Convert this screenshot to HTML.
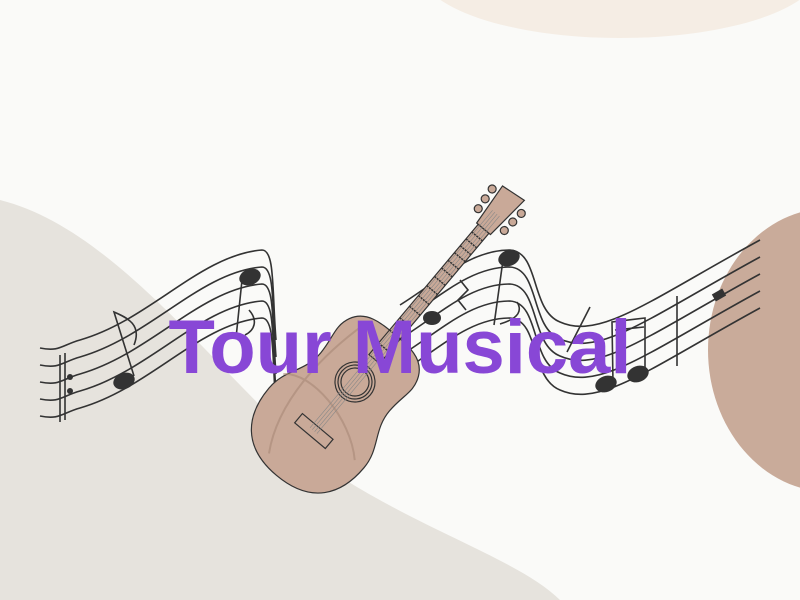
<!DOCTYPE html>
<html><head><meta charset="utf-8"><style>
html,body{margin:0;padding:0;width:800px;height:600px;overflow:hidden;background:#fafaf8}
svg{position:absolute;left:0;top:0}
.t{position:absolute;left:0;width:800px;top:310px;text-align:center;font:bold 76px "Liberation Sans",sans-serif;color:#8847d6;letter-spacing:0;line-height:1}
</style></head><body>
<svg width="800" height="600" viewBox="0 0 800 600">
<ellipse cx="620" cy="-30" rx="200" ry="68" fill="#f5ede4"/>
<path d="M0,200 C120,230 220,380 330,470 C420,530 520,560 560,600 L0,600 Z" fill="#e6e3dd"/>
<ellipse cx="830" cy="350" rx="122" ry="142" fill="#c9ab9a"/>
<g fill="none" stroke="#333" stroke-width="1.6">
<g id="st">
<path d="M40,348 C60,352 62,345 80,340 C150,320 200,255 262,250 C275,250 272,290 276,340"/>
<path d="M400,305 C440,280 470,250 510,250 C540,252 530,310 560,322 C600,340 650,300 760,240"/>
</g>
<use href="#st" y="17"/><use href="#st" y="34"/><use href="#st" y="51"/><use href="#st" y="68"/>
<path d="M60,355 V422 M65,353 V420 M677,296 V366 M567,352 L590,307"/>
<path d="M134,376 L114,312 C128,318 142,325 134,345 M242,280 L236,338 M503,260 L494,325 M517,302 C522,310 520,318 500,324 M613,383 L612,322 L645,318 L645,372 M615,330 L644,327"/>
<path d="M249,310 C258,320 255,330 245,335"/>
<path d="M460,280 L468,290 L458,300 L466,310"/>
</g>
<g fill="#333">
<ellipse cx="124" cy="381" rx="11" ry="8" transform="rotate(-20 124 381)"/>
<ellipse cx="250" cy="277" rx="11" ry="8" transform="rotate(-20 250 277)"/>
<ellipse cx="509" cy="258" rx="11" ry="8" transform="rotate(-20 509 258)"/>
<ellipse cx="432" cy="318" rx="9" ry="7"/>
<ellipse cx="606" cy="384" rx="11" ry="8" transform="rotate(-20 606 384)"/>
<ellipse cx="638" cy="374" rx="11" ry="8" transform="rotate(-20 638 374)"/>
<circle cx="70" cy="377" r="3"/><circle cx="70" cy="391" r="3"/>
<rect x="713" y="291" width="12" height="8" transform="rotate(-30 719 295)"/>
</g>
<g transform="translate(355,382) rotate(-50)" stroke="#333" stroke-width="1.2">
<path d="M-122,0 C-122,-45 -95,-62 -60,-62 C-35,-62 -25,-45 0,-45 C20,-45 30,-52 45,-45 C62,-37 62,-18 62,0 C62,18 62,37 45,45 C30,52 20,45 0,45 C-25,45 -35,62 -60,62 C-95,62 -122,45 -122,0 Z" fill="#c9a998"/>
<path d="M-110,-20 C-60,-50 10,-40 50,-30 M-60,50 C-30,20 -20,-40 -40,-60" fill="none" stroke="#a88876" stroke-width="2" opacity=".6"/>
<circle r="20" fill="none"/><circle r="17" fill="none"/><circle r="14" fill="none"/>
<rect x="-70" y="-20" width="12" height="40" fill="#c9a998"/>
<rect x="30" y="-7" width="170" height="14" fill="#c9a998"/>
<path d="M200,-9 L245,-13 L248,13 L200,9 Z" fill="#c9a998"/>
<g fill="#c9a998"><circle cx="212" cy="-17" r="4"/><circle cx="224" cy="-18" r="4"/><circle cx="236" cy="-19" r="4"/><circle cx="212" cy="17" r="4"/><circle cx="224" cy="18" r="4"/><circle cx="236" cy="19" r="4"/></g>
<path d="M-64,-5 L220,-5 M-64,-2 L220,-2 M-64,1 L220,1 M-64,4 L220,4" stroke="#888" stroke-width=".6"/>
<path d="M45,-7V7 M62,-7V7 M78,-7V7 M93,-7V7 M107,-7V7 M120,-7V7 M132,-7V7 M143,-7V7 M153,-7V7 M163,-7V7 M172,-7V7 M181,-7V7 M190,-7V7" stroke="#333" stroke-width="1.5" stroke-dasharray="2 1"/>
</g>
</svg>
<div class="t">Tour Musical</div>
</body></html>
